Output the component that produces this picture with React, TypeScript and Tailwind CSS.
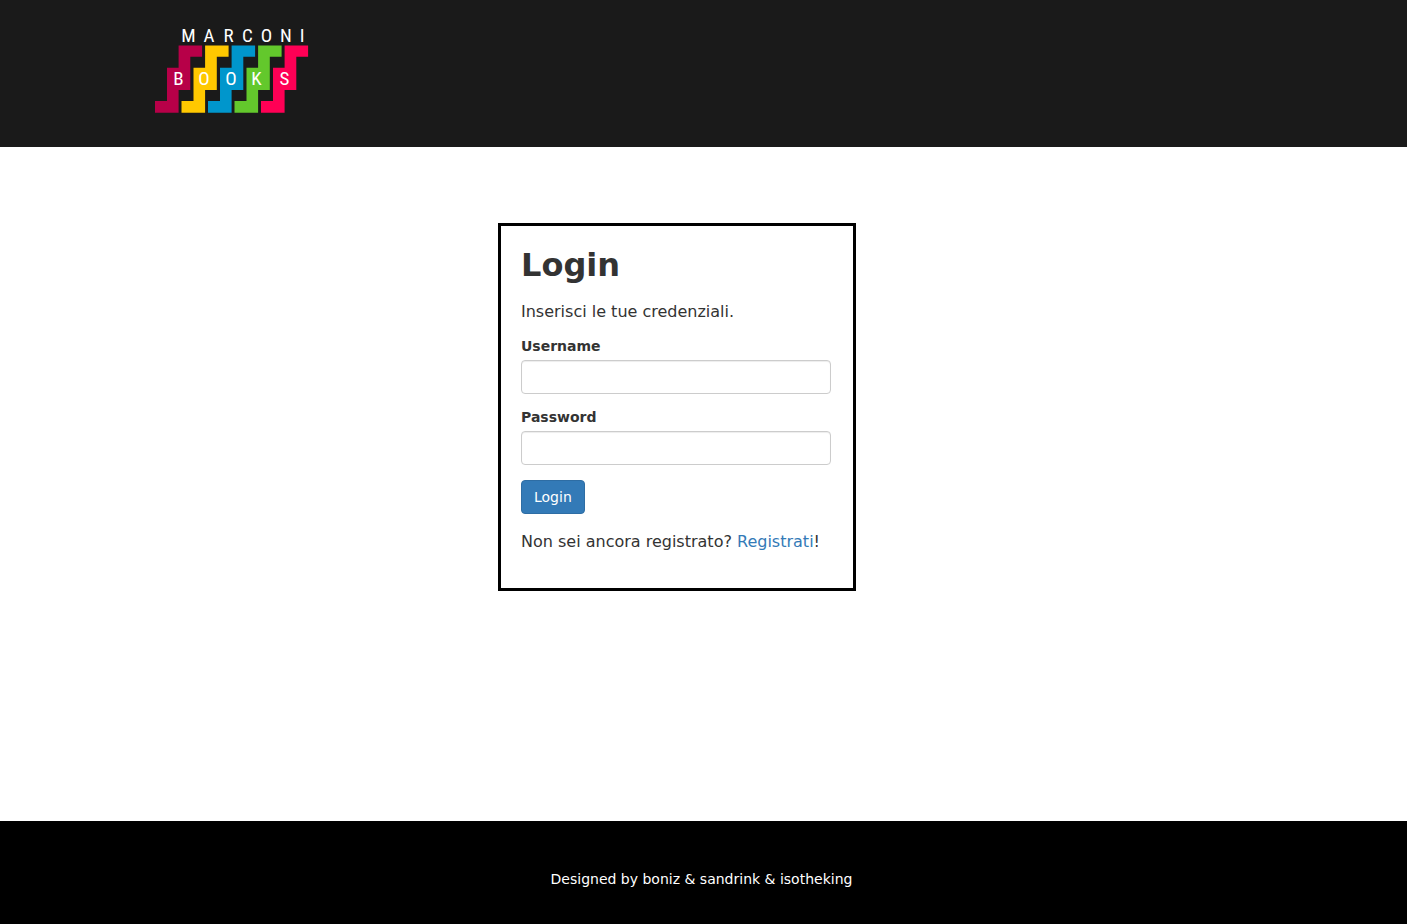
import React from "react";

const STEPS = ["#b70048", "#ffc800", "#0096cc", "#63c82c", "#ff0055"];

const TOP_LETTERS: [string, number][] = [
  ["M", 33.5],
  ["A", 54],
  ["R", 73.5],
  ["C", 92.5],
  ["O", 111.5],
  ["N", 131],
  ["I", 147],
];

const BOTTOM_LETTERS: [string, number][] = [
  ["B", 23.5],
  ["O", 49],
  ["O", 76],
  ["K", 101.5],
  ["S", 129.5],
];

function Logo() {
  return (
    <svg width="154" height="94" viewBox="0 -8 154 94" role="img" aria-label="Marconi Books">
      {STEPS.map((color, i) => (
        <path
          key={color}
          fill={color}
          transform={`translate(${i * 26.5} 0)`}
          d="M23.6 17.5H47.1V28.7H35.3V62H23.6V84.8H0V73H12V39.8H23.6Z"
        />
      ))}
      <g
        fill="#ffffff"
        fontSize="19"
        textAnchor="middle"
        className="font-['Roboto_Condensed','Liberation_Sans_Narrow',sans-serif]"
      >
        {TOP_LETTERS.map(([letter, x]) => (
          <text key={x} x={x} y="14">
            {letter}
          </text>
        ))}
        {BOTTOM_LETTERS.map(([letter, x]) => (
          <text key={x} x={x} y="57">
            {letter}
          </text>
        ))}
      </g>
    </svg>
  );
}

function Field({ id, label, type }: { id: string; label: string; type: string }) {
  return (
    <div className="flex flex-col gap-1">
      <label htmlFor={id} className="text-sm leading-5 font-bold">
        {label}
      </label>
      <input
        id={id}
        name={id}
        type={type}
        className="h-[34px] w-full rounded border border-[#cccccc] bg-white px-3 text-sm text-[#555555] shadow-[inset_0_1px_1px_rgba(0,0,0,0.075)] outline-none focus:border-[#66afe9]"
      />
    </div>
  );
}

export default function App() {
  return (
    <div className="flex min-h-screen flex-col bg-white font-['DejaVu_Sans',sans-serif] text-[#333333]">
      <header className="bg-[#1a1a1a] px-5 pt-5 pb-[33px]">
        <div className="mx-auto max-w-[1097px]">
          <a href="#" className="block w-fit">
            <Logo />
          </a>
        </div>
      </header>

      <main className="flex-1 pt-[76px] pr-[53px] pb-10">
        <section className="mx-auto max-w-[358px] border-3 border-black pt-[21px] pr-[22px] pb-[35px] pl-5">
          <h2 className="mb-[17px] text-[32px] leading-9 font-bold">Login</h2>
          <form className="flex flex-col gap-[13px]" onSubmit={(e) => e.preventDefault()}>
            <p className="text-base leading-[23px]">Inserisci le tue credenziali.</p>
            <Field id="username" label="Username" type="text" />
            <Field id="password" label="Password" type="password" />
            <button
              type="submit"
              className="mt-[2px] h-[34px] self-start rounded border border-[#2e6da4] bg-[#337ab7] px-3 text-sm text-white"
            >
              Login
            </button>
            <p className="mt-[3px] text-base leading-[23px]">
              Non sei ancora registrato?{" "}
              <a href="#" className="text-[#337ab7]">
                Registrati
              </a>
              !
            </p>
          </form>
        </section>
      </main>

      <footer className="bg-black pt-12 pr-5 pb-[35px] pl-4 text-center text-sm leading-5 text-white">
        Designed by boniz &amp; sandrink &amp; isotheking
      </footer>
    </div>
  );
}
